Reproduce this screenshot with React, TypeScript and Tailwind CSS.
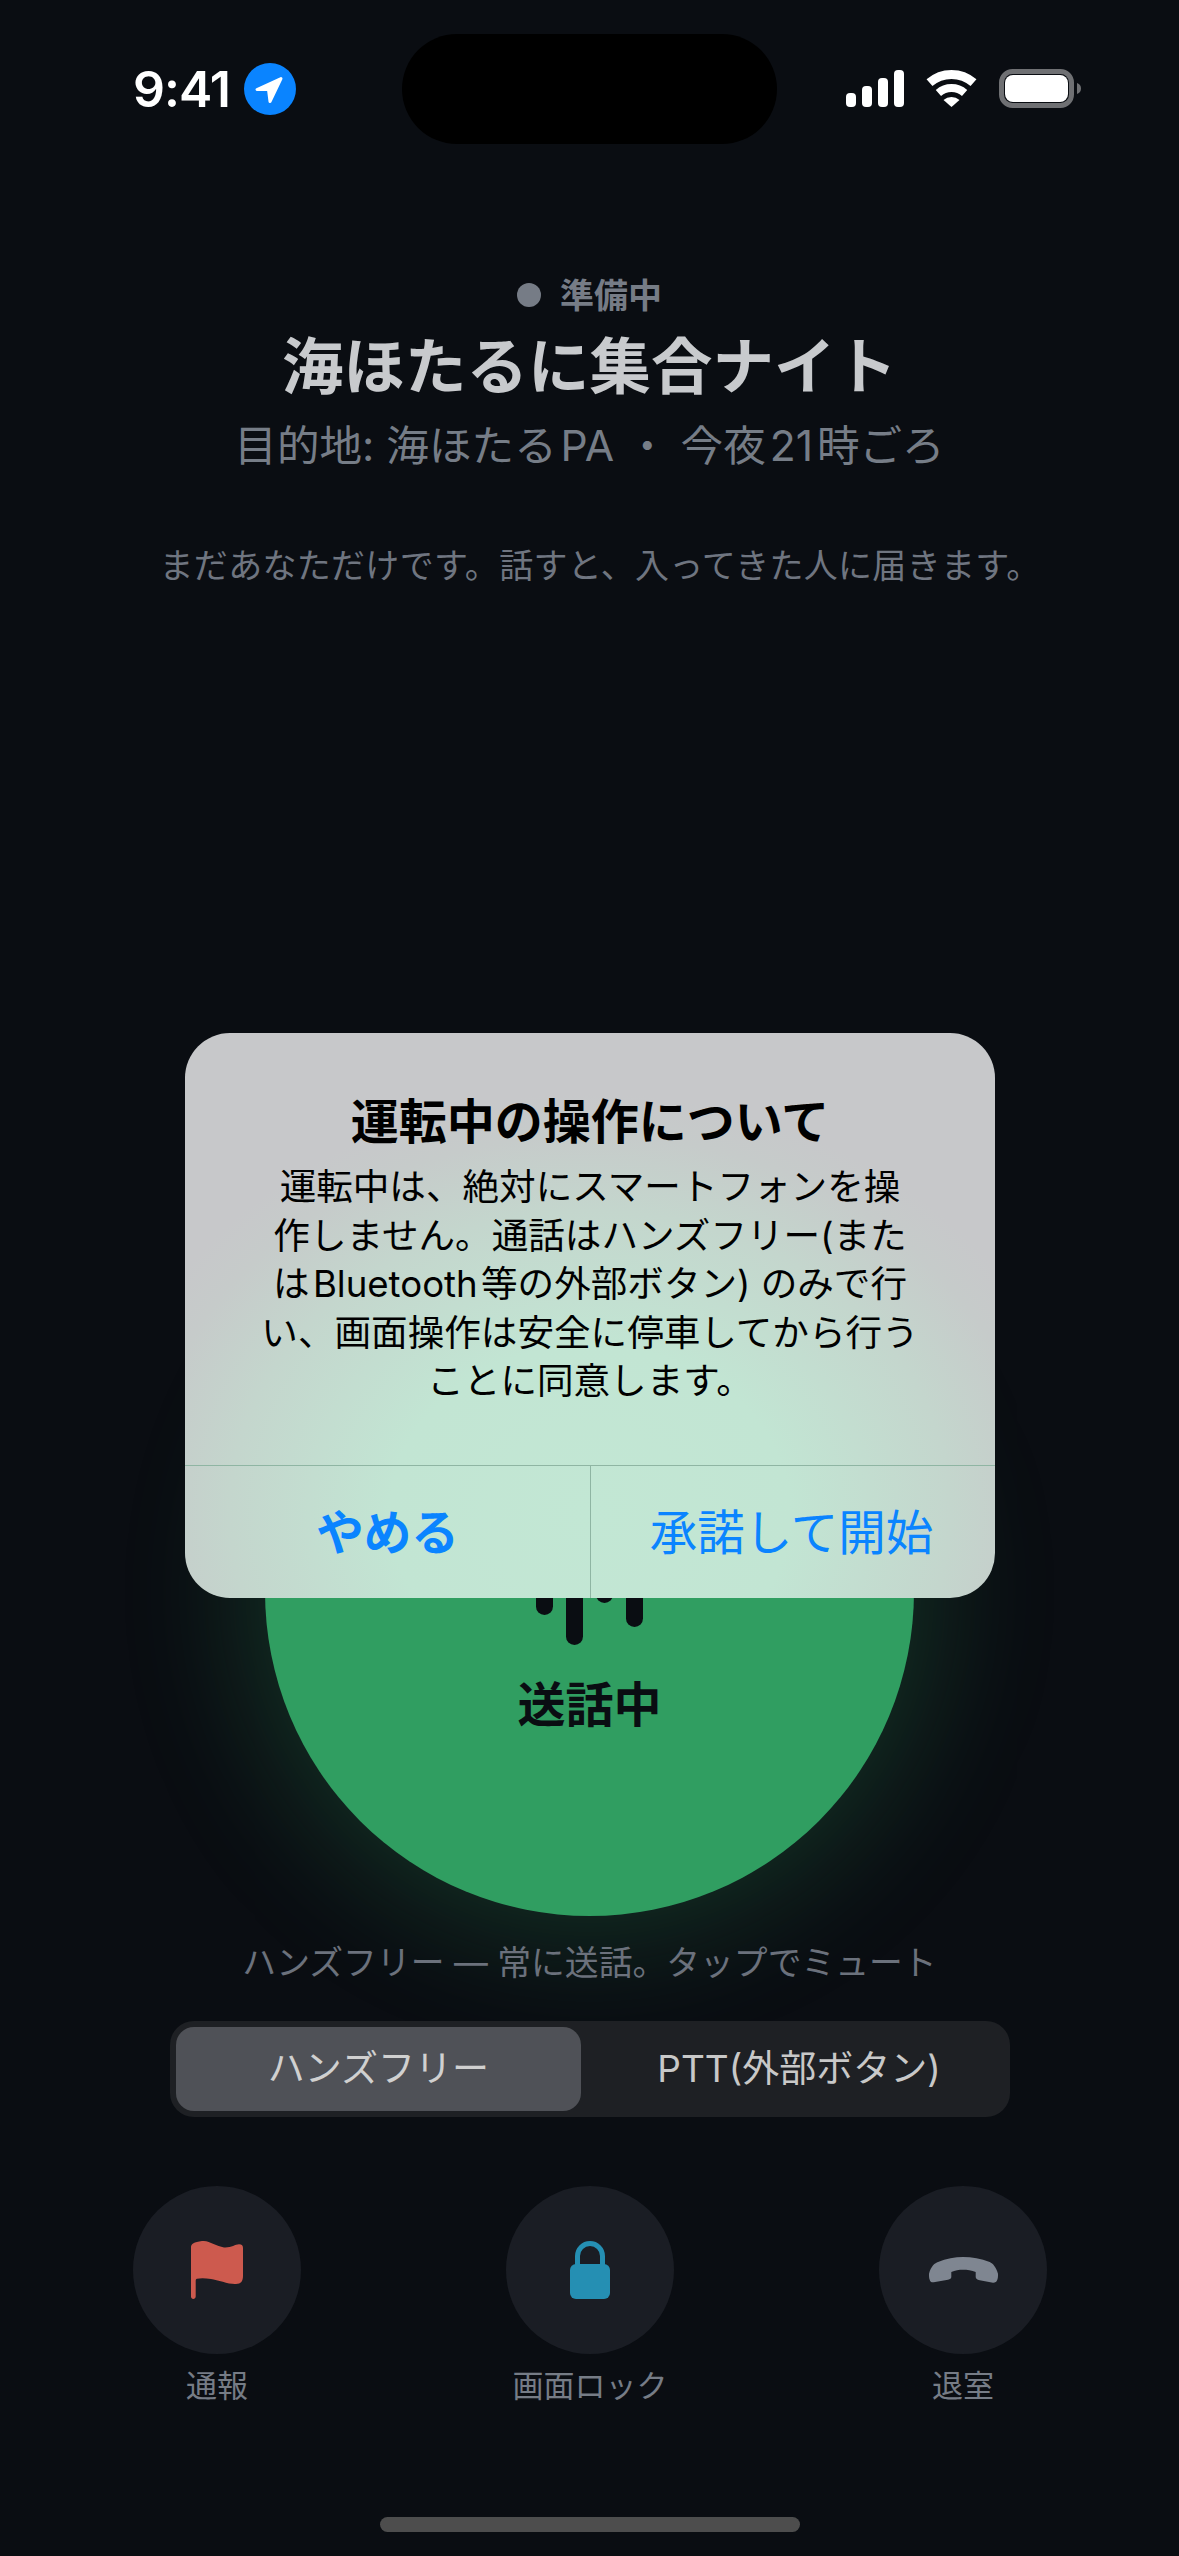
import React from "react";

const FONT = "font-['Inter','Noto_Sans_CJK_JP',sans-serif]";

const StatusIcons = () => (
  <svg width="236" height="40" viewBox="0 0 236 40" fill="none">
    <rect x="0" y="24" width="10" height="14" rx="4" fill="#fff" />
    <rect x="16" y="17" width="10" height="21" rx="4" fill="#fff" />
    <rect x="32" y="9" width="10" height="29" rx="4" fill="#fff" />
    <rect x="48" y="1" width="10" height="37" rx="4" fill="#fff" />
    <path d="M83.5 13.7A33.5 33.5 0 0 1 127.5 13.7" stroke="#fff" strokeWidth="9" />
    <path d="M92.4 23.9A20 20 0 0 1 118.6 23.9" stroke="#fff" strokeWidth="8" />
    <path d="M105.5 38L97.5 31A12 12 0 0 1 113.5 31Z" fill="#fff" />
    <rect x="155.5" y="2.5" width="70" height="34" rx="11" stroke="#6f7073" strokeWidth="5" />
    <rect x="159" y="6" width="63" height="27" rx="8" fill="#fff" />
    <path d="M231 14C234 15 235 17 235 19.5C235 22 234 24 231 25Z" fill="#6f7073" />
  </svg>
);

const FlagIcon = () => (
  <svg width="52" height="58" viewBox="0 0 52 58" fill="#cd5a4e">
    <path d="M0 6C0 3 3 1 11 0C18 -0.5 25 5 33 6.5C40 7 44 3.5 48 3.3C51 3.3 52 5 52 7V35C52 40 50 43 45 43C38 43.5 27 39 20 38C14 37 9 37 6 37.8C5 38 4.7 39 4.7 40V55.6C4.7 57 3.5 58 2.3 58C1 58 0 57 0 55.6Z" />
  </svg>
);

const LockIcon = () => (
  <svg width="40" height="58" viewBox="0 0 40 58" fill="none">
    <path d="M7.5 25V15a12.5 12.5 0 0 1 25 0V25" stroke="#258fb3" strokeWidth="5" />
    <rect x="0" y="23" width="40" height="35" rx="6" fill="#258fb3" />
  </svg>
);

const HangupIcon = () => (
  <svg width="69" height="26" viewBox="0 0 69 26" fill="#7f8691">
    <path d="M0 16.7C2 9 6 6 9 5C17 1.5 26 0 34 0C43 0 52 1.5 60.7 5C64 6.5 67 10 69 16.7C69 20 69 21 68.3 22.7C67.5 25 66 25.8 64 25.7L50.7 23.3C48 22.5 46.7 21.5 46.7 20V15C43 13.3 38 12.7 34 12.7C30 12.7 26 13.3 22.3 15V20C22.3 21.5 21 22.3 19 22.7L4.7 25.3C2.5 25.5 1.2 24.8 0.7 22.7C0 21 0 19 0 16.7Z" />
  </svg>
);

const actions = [
  { label: "通報", icon: <FlagIcon /> },
  { label: "画面ロック", icon: <LockIcon /> },
  { label: "退室", icon: <HangupIcon /> },
];

export default function App() {
  return (
    <div className={`relative flex h-[2556px] w-[1179px] flex-col overflow-hidden bg-[#0a0d12] ${FONT}`}>
      {/* status bar */}
      <div className="mt-[34px] flex h-[110px] shrink-0 items-center pl-[133px]">
        <div className="flex w-[269px] items-center">
          <span className="w-[111px] text-[50px] leading-none font-semibold tracking-[-1px] text-white">9:41</span>
          <span className="flex h-[52px] w-[52px] items-center justify-center rounded-full bg-[#0a84ff]">
            <svg width="52" height="52" viewBox="0 0 52 52" fill="#fff" stroke="#fff" strokeWidth="3" strokeLinejoin="round">
              <path d="M37 15.5L13 26.5H24.5L26 38.5Z" />
            </svg>
          </span>
        </div>
        <div className="h-[110px] w-[375px] rounded-full bg-black" />
        <div className="ml-[69px] mt-[-1px]">
          <StatusIcons />
        </div>
      </div>

      {/* room header */}
      <div className="flex shrink-0 flex-col items-center">
        <div className="mt-[131px] flex h-[40px] items-center gap-[19px] text-[34px] font-bold text-[#767c86]">
          <span className="h-[24px] w-[24px] rounded-full bg-[#767c86]" />
          <span>準備中</span>
        </div>
        <h1 className="mt-[16px] text-[61.5px] leading-[72px] font-bold text-[#c8cacd]">海ほたるに集合ナイト</h1>
        <p className="mt-[17px] text-[42.6px] leading-[52px] text-[#767d87]">目的地: 海ほたる{"\u200a"}PA ・ 今夜{"\u200a"}21{"\u200a"}時ごろ</p>
        <p className="mt-[72px] ml-[21px] text-[34px] leading-[44px] tracking-[0.3px] text-[#6f7580]">
          まだあなただけです。話すと、入ってきた人に届きます。
        </p>
      </div>

      {/* talk button */}
      <div className="flex flex-1 items-end justify-center">
        <div className="flex h-[649px] w-[649px] flex-col items-center rounded-full bg-[#309e61] shadow-[0_0_120px_24px_rgba(49,159,98,0.24)]">
          <div className="mt-[224px] flex h-[160px] items-center gap-[13px]">
            <span className="h-[88px] w-[17px] rounded-full bg-[#0a0d12]" />
            <span className="h-[148px] w-[17px] rounded-full bg-[#0a0d12]" />
            <span className="h-[64px] w-[17px] rounded-full bg-[#0a0d12]" />
            <span className="h-[112px] w-[17px] rounded-full bg-[#0a0d12]" />
          </div>
          <span className="mt-[24px] text-[48px] leading-[60px] font-bold text-[#0a0d12]">送話中</span>
        </div>
      </div>

      {/* mode */}
      <p className="relative mt-[25px] shrink-0 text-center text-[33.8px] leading-[44px] text-[#6b717c]">
        ハンズフリー — 常に送話。タップでミュート
      </p>
      <div className="relative mr-[169px] ml-[170px] mt-[36px] flex h-[96px] shrink-0 items-center rounded-[24px] bg-[#1e2024] p-[6px]">
        <div className="flex h-[84px] w-[405px] items-center justify-center rounded-[18px] bg-[#4f5157] text-[37px] text-[#d0d0d0]">
          ハンズフリー
        </div>
        <div className="flex h-[84px] flex-1 items-center justify-center pl-[13px] text-[37px] text-[#c8c8c8]">
          PTT(外部ボタン)
        </div>
      </div>

      {/* actions */}
      <div className="mt-[69px] flex shrink-0 justify-between pr-[132px] pl-[133px]">
        {actions.map((a) => (
          <div key={a.label} className="flex w-[168px] flex-col items-center">
            <div className="flex h-[168px] w-[168px] items-center justify-center rounded-full bg-[#1a1d24]">
              {a.icon}
            </div>
            <span className="mt-[10px] text-[31px] leading-[44px] whitespace-nowrap text-[#767c86]">{a.label}</span>
          </div>
        ))}
      </div>

      {/* home indicator */}
      <div className="mx-auto mt-[109px] mb-[24px] h-[15px] w-[420px] shrink-0 rounded-full bg-[#4d4d4d]" />

      {/* alert */}
      <div className="absolute top-[1033px] left-[185px] flex h-[565px] w-[810px] flex-col overflow-hidden rounded-[45px] bg-[radial-gradient(ellipse_500px_420px_at_50%_85%,#c2e7d4_0%,#c2e5d3_40%,#c4d6cd_72%,#c6cbca_90%,#c7c8ca_100%)]">
        <div className="flex h-[432px] flex-col items-center pt-[59px] text-black">
          <h2 className="text-[48px] leading-[60px] font-bold">運転中の操作について</h2>
          <p className="mt-[11px] text-center text-[36.6px] leading-[48.5px] whitespace-nowrap">
            運転中は、絶対にスマートフォンを操
            <br />
            作しません。通話はハンズフリー(また
            <br />
            は{"\u200a"}Bluetooth{"\u200a"}等の外部ボタン) のみで行
            <br />
            い、画面操作は安全に停車してから行う
            <br />
            ことに同意します。
          </p>
        </div>
        <div className="flex flex-1 border-t border-[#8fb5a3]">
          <button className="flex w-[406px] items-center justify-center border-r border-[#8fb5a3] pt-[2px] text-[47.5px] font-bold text-[#0a84ff]">
            やめる
          </button>
          <button className="flex flex-1 items-center justify-center pt-[2px] pr-[3px] text-[47.5px] text-[#0a84ff]">
            承諾して開始
          </button>
        </div>
      </div>
    </div>
  );
}
